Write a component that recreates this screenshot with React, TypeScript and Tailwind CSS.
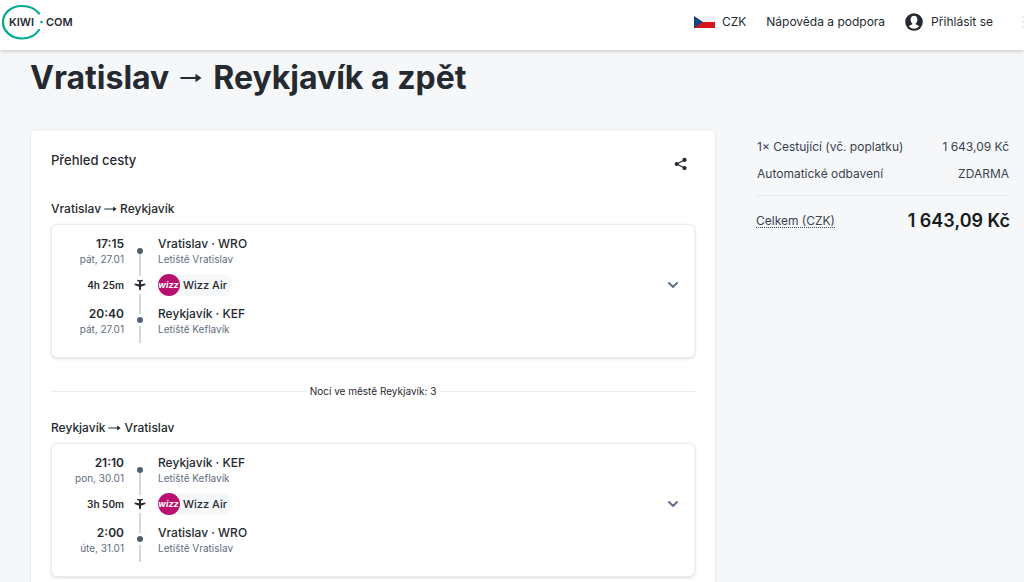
import { ChevronDown } from 'lucide-react';

type Stop = { time: string; date: string; city: string; airport: string };

type Trip = {
    from: string;
    to: string;
    duration: string;
    departure: Stop;
    arrival: Stop;
};

const trips: Trip[] = [
    {
        from: 'Vratislav',
        to: 'Reykjavík',
        duration: '4h 25m',
        departure: { time: '17:15', date: 'pát, 27.01', city: 'Vratislav · WRO', airport: 'Letiště Vratislav' },
        arrival: { time: '20:40', date: 'pát, 27.01', city: 'Reykjavík · KEF', airport: 'Letiště Keflavík' },
    },
    {
        from: 'Reykjavík',
        to: 'Vratislav',
        duration: '3h 50m',
        departure: { time: '21:10', date: 'pon, 30.01', city: 'Reykjavík · KEF', airport: 'Letiště Keflavík' },
        arrival: { time: '2:00', date: 'úte, 31.01', city: 'Vratislav · WRO', airport: 'Letiště Vratislav' },
    },
];

function Logo() {
    return (
        <a href="#" aria-label="Kiwi.com" className="block">
            <svg width="76" height="38" viewBox="0 0 76 38" fill="none">
                <path
                    d="M39 10.5C35.5 6 29.5 3 22 3C11 3 3 10 3 19C3 28 11 35.5 22 35.5C29.5 35.5 35.5 32.5 39 27"
                    stroke="#00a991"
                    strokeWidth="2.2"
                    strokeLinecap="round"
                />
                <circle cx="41.5" cy="19" r="1.3" fill="#00a991" />
                <g fill="#252a31" fontFamily="Inter, sans-serif" fontSize="11" fontWeight="600">
                    <text x="9" y="23">KIWI</text>
                    <text x="46" y="23">COM</text>
                </g>
            </svg>
        </a>
    );
}

function CzechFlag() {
    return (
        <svg width="21" height="12" viewBox="0 0 21 12">
            <rect width="21" height="6" fill="#f1f3f5" />
            <rect y="6" width="21" height="6" fill="#d7141a" />
            <path d="M0 0L9 6L0 12Z" fill="#11457e" />
        </svg>
    );
}

function AccountIcon() {
    return (
        <svg width="18" height="18" viewBox="0 0 18 18">
            <circle cx="9" cy="9" r="8.8" fill="#252a31" />
            <path
                d="M9 2.8C6.9 2.8 5.6 4.3 5.6 6.5C5.6 8.3 6.3 9.6 7.2 10.3V11.5C6 12 4.6 12.4 3.8 13.2C5.1 14.8 6.9 15.7 9 15.7C11.1 15.7 12.9 14.8 14.2 13.2C13.4 12.4 12 12 10.8 11.5V10.3C11.7 9.6 12.4 8.3 12.4 6.5C12.4 4.3 11.1 2.8 9 2.8Z"
                fill="#fff"
            />
        </svg>
    );
}

function ArrowRight({ className }: { className: string }) {
    return (
        <svg viewBox="0 0 22 10" className={className}>
            <path d="M0.5 4.1H15.5V0.8L21.5 5L15.5 9.2V5.9H0.5Z" fill="currentColor" />
        </svg>
    );
}

function ShareIcon() {
    return (
        <svg width="14" height="14" viewBox="0 0 14 14" fill="#252a31">
            <path d="M10.5 3L2.8 7L10.5 11" fill="none" stroke="#252a31" strokeWidth="1.2" />
            <circle cx="2.7" cy="7" r="2.1" />
            <circle cx="10.5" cy="2.9" r="2.1" />
            <circle cx="10.5" cy="11.1" r="2.1" />
        </svg>
    );
}

function PlaneIcon() {
    return (
        <svg width="12" height="12" viewBox="0 0 12 12" fill="#252a31">
            <path d="M6 11.8L5 10.2V7.8L0.6 6V4.6L5 5.2V2.8L3.2 1.9V0.8L6 1.3L8.8 0.8V1.9L7 2.8V5.2L11.4 4.6V6L7 7.8V10.2Z" />
        </svg>
    );
}

function WizzLogo() {
    return (
        <svg width="22" height="22" viewBox="0 0 22 22">
            <circle cx="11" cy="11" r="11" fill="#b9106f" />
            <text
                x="10.5"
                y="14.3"
                textAnchor="middle"
                fill="#fff"
                fontFamily="Inter, sans-serif"
                fontSize="9"
                fontWeight="700"
                fontStyle="italic"
            >
                wizz
            </text>
        </svg>
    );
}

function TimeBlock({ stop }: { stop: Stop }) {
    return (
        <div className="text-right">
            <p className="text-xs leading-4 font-semibold">{stop.time}</p>
            <p className="text-[10px] leading-[14px] text-[#5f6d80]">{stop.date}</p>
        </div>
    );
}

function PlaceBlock({ stop }: { stop: Stop }) {
    return (
        <div>
            <p className="text-xs leading-4 font-medium">{stop.city}</p>
            <p className="text-[10px] leading-[14px] text-[#5f6d80]">{stop.airport}</p>
        </div>
    );
}

function TripCard({ trip }: { trip: Trip }) {
    return (
        <section>
            <h3 className="mb-[7px] flex items-center gap-[3px] text-xs leading-4 font-medium">
                {trip.from}
                <ArrowRight className="h-2 w-[13px]" />
                {trip.to}
            </h3>
            <div className="flex items-center rounded-md border border-[#e8edf1] bg-white pb-[14px] shadow-[0_1px_3px_rgba(37,42,49,0.16)]">
                <div className="w-[72px] self-start pt-[11px]">
                    <TimeBlock stop={trip.departure} />
                    <p className="mt-[11px] mb-[13px] text-right text-[10px] leading-4 font-semibold">{trip.duration}</p>
                    <TimeBlock stop={trip.arrival} />
                </div>
                <div className="flex w-8 flex-col items-center self-start pt-[23px]">
                    <span className="size-[6px] rounded-full bg-[#4f5e71]" />
                    <span className="h-[22px] w-[2px] bg-[#d0d8e2]" />
                    <span className="my-[3px]">
                        <PlaneIcon />
                    </span>
                    <span className="h-5 w-[2px] bg-[#d0d8e2]" />
                    <span className="my-[3px] size-[6px] rounded-full bg-[#4f5e71]" />
                    <span className="h-[17px] w-[2px] bg-[#d0d8e2]" />
                </div>
                <div className="flex-1 self-start pt-[11px] pl-0.5">
                    <PlaceBlock stop={trip.departure} />
                    <div className="mt-2 mb-[10px] flex h-[22px] w-fit items-center gap-[3px] rounded-full bg-[#f5f7f9] pr-[5px] text-[11px] font-medium">
                        <WizzLogo />
                        Wizz Air
                    </div>
                    <PlaceBlock stop={trip.arrival} />
                </div>
                <button aria-label="Zobrazit detail" className="mt-0.5 mr-[13px] text-[#5f738c]">
                    <ChevronDown size={16} strokeWidth={3} />
                </button>
            </div>
        </section>
    );
}

function Header() {
    return (
        <header className="relative flex h-[50px] items-center overflow-hidden bg-white pb-[6px] shadow-[0_1px_4px_rgba(37,42,49,0.24)]">
            <Logo />
            <nav className="-mr-4 ml-auto flex items-center text-xs">
                <button className="flex items-center gap-[7px]">
                    <CzechFlag />
                    CZK
                </button>
                <a href="#" className="ml-5">Nápověda a podpora</a>
                <button className="ml-5 flex items-center gap-2">
                    <AccountIcon />
                    Přihlásit se
                </button>
                <button aria-label="Menu" className="ml-[29px] flex w-[18px] flex-col gap-[3px]">
                    <span className="h-[2px] bg-[#e8edf1]" />
                    <span className="h-[2px] bg-[#e8edf1]" />
                    <span className="h-[2px] bg-[#e8edf1]" />
                </button>
            </nav>
        </header>
    );
}

function PriceSummary() {
    return (
        <aside className="pt-1">
            <dl className="text-xs text-[#3b434d]">
                <div className="flex justify-between px-px leading-[27px]">
                    <dt>1× Cestující (vč. poplatku)</dt>
                    <dd>1 643,09 Kč</dd>
                </div>
                <div className="flex justify-between px-px leading-[27px]">
                    <dt>Automatické odbavení</dt>
                    <dd>ZDARMA</dd>
                </div>
                <div className="mt-2 flex items-center justify-between border-t border-[#e8edf1] pt-[11px]">
                    <dt className="underline decoration-dotted underline-offset-2">Celkem (CZK)</dt>
                    <dd className="text-lg leading-7 font-semibold text-[#171b1e]">1 643,09 Kč</dd>
                </div>
            </dl>
        </aside>
    );
}

export default function App() {
    return (
        <div className="min-h-screen bg-[#f5f7f9] font-['Inter',sans-serif] text-[#252a31]">
            <Header />
            <main className="pt-1 pr-[14px] pl-[30px]">
                <h1 className="flex items-center gap-[11px] text-[32px] leading-[48px] font-bold">
                    Vratislav
                    <ArrowRight className="h-[10px] w-[22px]" />
                    Reykjavík a zpět
                </h1>
                <div className="mt-[27px] grid grid-cols-[minmax(0,1fr)_254px] items-start gap-10">
                    <div className="rounded-sm border border-[#e8edf1] bg-white p-5">
                        <div className="mb-[23px] flex items-start justify-between">
                            <h2 className="text-[13px] leading-5 font-medium">Přehled cesty</h2>
                            <button aria-label="Sdílet" className="flex size-7 items-center justify-center">
                                <ShareIcon />
                            </button>
                        </div>
                        <TripCard trip={trips[0]} />
                        <div className="mt-[25px] mb-[21px] flex items-center gap-1 text-[10px] leading-4">
                            <span className="h-px flex-1 bg-[#e8edf1]" />
                            Nocí ve městě Reykjavík: 3
                            <span className="h-px flex-1 bg-[#e8edf1]" />
                        </div>
                        <TripCard trip={trips[1]} />
                    </div>
                    <PriceSummary />
                </div>
            </main>
        </div>
    );
}
